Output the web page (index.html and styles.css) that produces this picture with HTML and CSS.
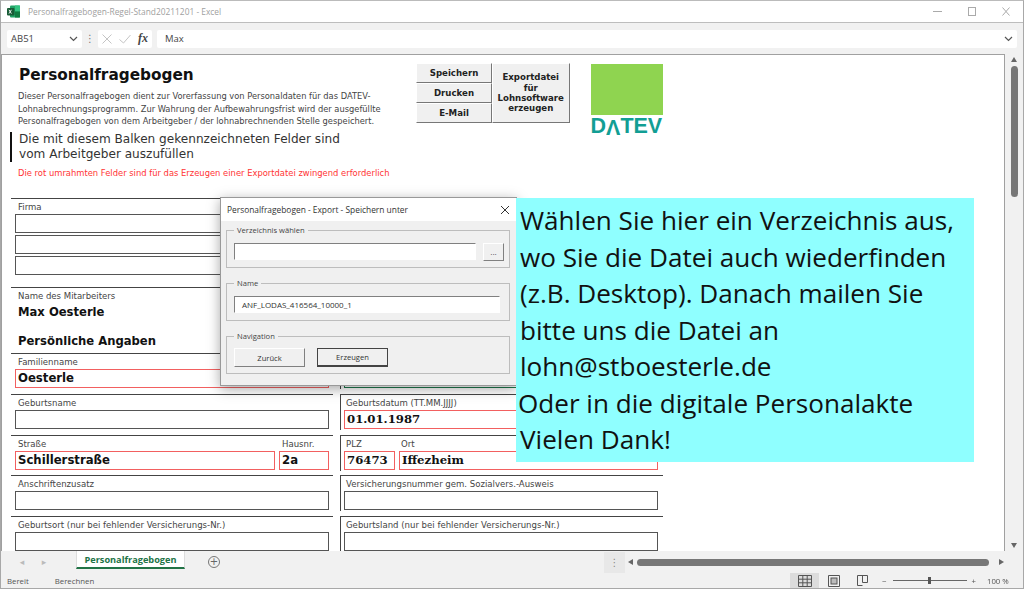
FILE: index.html
```html
<!DOCTYPE html>
<html lang="de">
<head>
    <meta charset="UTF-8">
    <title>Personalfragebogen-Regel-Stand20211201 - Excel</title>
    <link rel="stylesheet" href="styles.css">
</head>
<body>
    <header class="titlebar">
        <svg class="xl-icon" width="13" height="13" viewBox="0 0 13 13">
            <rect x="3" y="0.5" width="10" height="12" rx="1" fill="#21a366"/>
            <rect x="8" y="0.5" width="5" height="6" fill="#33c481"/>
            <rect x="8" y="6.5" width="5" height="6" fill="#107c41"/>
            <rect x="0" y="3" width="7.5" height="7.5" rx="1" fill="#185c37"/>
            <path d="M2 4.8l2.4 3.8M4.4 4.8L2 8.6" stroke="#fff" stroke-width="0.9"/>
        </svg>
        <span class="doc-title">Personalfragebogen-Regel-Stand20211201 - Excel</span>
        <div class="win-buttons">
            <svg width="9" height="9" viewBox="0 0 9 9"><path d="M0 4.5h9" stroke="#aaa"/></svg>
            <svg width="8" height="9" viewBox="0 0 8 9"><rect x="0.5" y="0.5" width="7" height="8" fill="none" stroke="#aaa"/></svg>
            <svg width="8" height="9" viewBox="0 0 8 9"><path d="M0.5 0.5l7 8M7.5 0.5l-7 8" stroke="#aaa"/></svg>
        </div>
    </header>

    <div class="formulabar">
        <div class="namebox">AB51
            <svg width="9" height="6" viewBox="0 0 9 6"><path d="M1 1l3.5 3.5L8 1" fill="none" stroke="#555" stroke-width="1.2"/></svg>
        </div>
        <span class="grip">&#8942;</span>
        <div class="fx-box">
            <svg width="10" height="10" viewBox="0 0 10 10"><path d="M0.5 0.5l9 9M9.5 0.5l-9 9" stroke="#c4c4c4"/></svg>
            <svg width="12" height="10" viewBox="0 0 12 10"><path d="M0.5 5.5l4 3.5L11.5 1" fill="none" stroke="#c4c4c4"/></svg>
            <span class="fx">fx</span>
        </div>
        <div class="formula">Max
            <svg width="9" height="6" viewBox="0 0 9 6"><path d="M1 1l3.5 3.5L8 1" fill="none" stroke="#555" stroke-width="1.2"/></svg>
        </div>
    </div>

    <main class="workarea">
        <div class="sheet">
            <section class="intro">
                <div class="intro-text">
                    <h1>Personalfragebogen</h1>
                    <p class="small">Dieser Personalfragebogen dient zur Vorerfassung von Personaldaten für das DATEV-<br>Lohnabrechnungsprogramm. Zur Wahrung der Aufbewahrungsfrist wird der ausgefüllte<br>Personalfragebogen von dem Arbeitgeber / der lohnabrechnenden Stelle gespeichert.</p>
                    <p class="marked">Die mit diesem Balken gekennzeichneten Felder sind<br>vom Arbeitgeber auszufüllen</p>
                    <p class="required">Die rot umrahmten Felder sind für das Erzeugen einer Exportdatei zwingend erforderlich</p>
                </div>
                <div class="actions">
                    <div class="action-col">
                        <button class="btn3d">Speichern</button>
                        <button class="btn3d">Drucken</button>
                        <button class="btn3d">E-Mail</button>
                    </div>
                    <button class="btn3d export">Exportdatei<br>für<br>Lohnsoftware<br>erzeugen</button>
                </div>
                <div class="logo">
                    <div class="logo-square"></div>
                    <div class="logo-text">D<span class="flip">V</span>TEV</div>
                </div>
            </section>

            <section class="form">
                <div class="col">
                    <div class="group firma">
                        <label>Firma</label>
                        <div class="field"></div>
                        <div class="field"></div>
                        <div class="field"></div>
                    </div>
                    <div class="group person">
                        <label>Name des Mitarbeiters</label>
                        <div class="bigvalue">Max Oesterle</div>
                        <div class="bigvalue heading">Persönliche Angaben</div>
                    </div>
                    <div class="group">
                        <label>Familienname</label>
                        <div class="field red">Oesterle</div>
                    </div>
                    <div class="group">
                        <label>Geburtsname</label>
                        <div class="field"></div>
                    </div>
                    <div class="group split">
                        <div class="grow"><label>Straße</label><div class="field red">Schillerstraße</div></div>
                        <div class="house"><label>Hausnr.</label><div class="field red">2a</div></div>
                    </div>
                    <div class="group">
                        <label>Anschriftenzusatz</label>
                        <div class="field"></div>
                    </div>
                    <div class="group">
                        <label>Geburtsort (nur bei fehlender Versicherungs-Nr.)</label>
                        <div class="field"></div>
                    </div>
                </div>
                <div class="col right">
                    <div class="group spacer"></div>
                    <div class="group">
                        <label></label>
                        <div class="field green"></div>
                    </div>
                    <div class="group">
                        <label>Geburtsdatum (TT.MM.JJJJ)</label>
                        <div class="field red serif">01.01.1987</div>
                    </div>
                    <div class="group split">
                        <div class="plz"><label>PLZ</label><div class="field red serif">76473</div></div>
                        <div class="grow"><label>Ort</label><div class="field red serif">Iffezheim</div></div>
                    </div>
                    <div class="group">
                        <label>Versicherungsnummer gem. Sozialvers.-Ausweis</label>
                        <div class="field"></div>
                    </div>
                    <div class="group">
                        <label>Geburtsland (nur bei fehlender Versicherungs-Nr.)</label>
                        <div class="field"></div>
                    </div>
                </div>
            </section>

            <!-- Export Dialog -->
            <div class="dialog">
                <div class="dialog-title">Personalfragebogen - Export - Speichern unter
                    <svg width="10" height="10" viewBox="0 0 10 10"><path d="M1 1l8 8M9 1l-8 8" stroke="#333"/></svg>
                </div>
                <div class="dialog-body">
                    <fieldset>
                        <legend>Verzeichnis wählen</legend>
                        <div class="dir-row">
                            <div class="textbox"></div>
                            <button class="browse">...</button>
                        </div>
                    </fieldset>
                    <fieldset>
                        <legend>Name</legend>
                        <div class="textbox name-box">ANF_LODAS_416564_10000_1</div>
                    </fieldset>
                    <fieldset class="nav-set">
                        <legend>Navigation</legend>
                        <div class="nav-row">
                            <button class="dlg-btn">Zurück</button>
                            <button class="dlg-btn default">Erzeugen</button>
                        </div>
                    </fieldset>
                </div>
            </div>

            <div class="callout">Wählen Sie hier ein Verzeichnis aus,<br>wo Sie die Datei auch wiederfinden<br>(z.B. Desktop). Danach mailen Sie<br>bitte uns die Datei an<br>lohn@stboesterle.de<br><span class="pasted">Oder in die digitale Personalakte</span><br>Vielen Dank!</div>
        </div>
        <div class="vscroll">
            <span class="arrow-up"></span>
            <span class="vthumb"></span>
            <span class="arrow-down"></span>
        </div>
    </main>

    <div class="tabbar">
        <span class="tab-nav first">&#9666;</span>
        <span class="tab-nav">&#9656;</span>
        <div class="tab">Personalfragebogen</div>
        <span class="add-sheet">+</span>
        <span class="tab-grip">&#8942;</span>
        <div class="hscroll">
            <span class="arrow-left"></span>
            <span class="hthumb"></span>
            <span class="arrow-right"></span>
        </div>
    </div>

    <footer class="statusbar">
        <span class="status-ready">Bereit</span>
        <span class="status-calc">Berechnen</span>
        <div class="views">
            <span class="view active">
                <svg width="14" height="12" viewBox="0 0 14 12"><path d="M.5.5h13v11H.5zM.5 4.2h13M.5 7.8h13M4.8.5v11M9.2.5v11" fill="none" stroke="#555"/></svg>
            </span>
            <span class="view">
                <svg width="12" height="12" viewBox="0 0 12 12"><path d="M.5.5h11v11H.5z" fill="none" stroke="#555"/><rect x="3" y="3" width="6" height="6" fill="#bbb" stroke="#555"/></svg>
            </span>
            <span class="view">
                <svg width="11" height="12" viewBox="0 0 11 12"><path d="M.5 10.5V.5h10v7h-5V.5M.5 10.5h5" fill="none" stroke="#555"/></svg>
            </span>
        </div>
        <div class="zoom">
            <span>&minus;</span>
            <div class="slider"><i></i></div>
            <span>+</span>
            <span class="zoom-val">100 %</span>
        </div>
    </footer>
</body>
</html>
```

FILE: styles.css
```css
/* Excel window */
* {
    box-sizing: border-box;
}

html, body {
    height: 100%;
}

body {
    margin: 0;
    width: 1024px;
    height: 589px;
    overflow: hidden;
    display: flex;
    flex-direction: column;
    font-family: "DejaVu Sans", Verdana, sans-serif;
    background-color: #f1f1f1;
    color: #333;
    border: 1px solid #a8a8a8;
    border-top-color: #bbb;
    filter: blur(0.3px);
}

.titlebar {
    height: 22px;
    background-color: #fff;
    display: flex;
    align-items: center;
    padding-left: 6px;
    border-bottom: 1px solid #bdbdbd;
    flex-shrink: 0;
}

.doc-title {
    margin-left: 8px;
    font-family: "Open Sans", sans-serif;
    font-size: 8.4px;
    color: #a0a0a0;
}

.win-buttons {
    margin-left: auto;
    display: flex;
    gap: 26px;
    padding-right: 13px;
}

.formulabar {
    height: 31px;
    background-color: #f1f1f1;
    display: flex;
    align-items: center;
    padding: 0 6px;
    flex-shrink: 0;
}

.namebox, .fx-box, .formula {
    height: 18px;
    background-color: #fff;
    border-radius: 2px;
    display: flex;
    align-items: center;
    font-family: "Open Sans", sans-serif;
    font-size: 9.5px;
    color: #444;
}

.namebox {
    width: 75px;
    padding: 0 4px;
    justify-content: space-between;
}

.grip {
    width: 16px;
    text-align: center;
    font-size: 10px;
    color: #777;
}

.fx-box {
    width: 54px;
    gap: 7px;
    padding-left: 4px;
}

.fx {
    font-family: "Liberation Serif", serif;
    font-style: italic;
    font-weight: 700;
    font-size: 12px;
    color: #444;
}

.formula {
    margin-left: 5px;
    flex: 1;
    padding: 0 4px 0 8px;
    justify-content: space-between;
}

.workarea {
    flex: 1;
    min-height: 0;
    display: flex;
}

.sheet {
    position: relative;
    width: 1004px;
    background-color: #fff;
    border: 1px solid #a0a0a0;
    border-width: 1px 1px 0 1px;
    overflow: hidden;
    padding: 9px 0 0 8px;
}

/* Top part of the form */
.intro {
    display: flex;
    height: 134px;
}

.intro-text {
    width: 406px;
}

h1 {
    margin: 1px 0 0 9px;
    font-size: 15.3px;
    line-height: 20px;
    color: #111;
}

.small {
    margin: 5px 0 0 8px;
    font-size: 8.3px;
    line-height: 12.5px;
    color: #444;
}

.marked {
    margin: 4px 0 0 0;
    padding-left: 7px;
    border-left: 2px solid #111;
    font-size: 12.1px;
    line-height: 15px;
    color: #333;
}

.required {
    margin: 5.5px 0 0 8px;
    font-size: 8.4px;
    line-height: 12px;
    color: #f33;
}

.actions {
    display: flex;
    height: 60px;
    margin-top: -1px;
}

.action-col {
    display: flex;
    flex-direction: column;
    width: 76px;
}

.btn3d {
    flex: 1;
    padding: 0;
    background-color: #f0f0f0;
    border: 0;
    border-right: 1px solid #777;
    border-bottom: 1px solid #777;
    border-top: 1px solid #fff;
    border-left: 1px solid #fff;
    font-family: "DejaVu Sans", sans-serif;
    font-weight: 700;
    font-size: 8.6px;
    color: #222;
}

.export {
    flex: none;
    width: 77.5px;
    line-height: 10.4px;
}

.logo {
    margin-left: 21px;
    width: 72px;
}

.logo-square {
    height: 51px;
    background-color: #8fd450;
}

.logo-text {
    margin-top: 3px;
    font-family: "Liberation Sans", sans-serif;
    font-weight: 700;
    font-size: 21.5px;
    line-height: 17px;
    white-space: nowrap;
    color: #129e94;
}

.flip {
    display: inline-block;
    transform: scaleY(-1);
}

/* Form columns */
.form {
    display: flex;
    gap: 7px;
    margin-left: 1px;
}

.col {
    width: 322px;
}

.col.right {
    width: 323px;
}

.group {
    border-top: 1px solid #444;
    padding: 1px 4px 0 4px;
    height: 40.75px;
}

.right .group {
    height: 36px;
    margin-bottom: 4.75px;
    border-left: 1px solid #444;
    padding-left: 3px;
    padding-right: 5px;
}

.right .group.spacer {
    height: 150px;
    margin-bottom: 5px;
    border: 0;
}

.group label {
    display: block;
    height: 14px;
    padding-left: 3px;
    font-size: 8.55px;
    line-height: 14px;
    color: #444;
}

.right .group label {
    padding-left: 2px;
}

.field {
    height: 19px;
    border: 1px solid #555;
    margin-bottom: 2px;
    padding-left: 2px;
    font-size: 11.7px;
    font-weight: 700;
    line-height: 17px;
    color: #111;
}

.field.red {
    border-color: #f26060;
}

.field.green {
    border-color: #1f7a4d;
}

.serif {
    font-family: "DejaVu Serif", serif;
}

.firma {
    height: 89px;
}

.person {
    height: 66px;
}

.bigvalue {
    font-size: 11.6px;
    font-weight: 700;
    line-height: 18px;
    height: 18px;
    padding-left: 3px;
    color: #111;
}

.heading {
    margin-top: 11px;
}

.split {
    display: flex;
    gap: 4px;
}

.grow {
    flex: 1;
}

.house {
    width: 50px;
}

.plz {
    width: 51px;
}

/* Dialog */
.dialog {
    position: absolute;
    left: 218px;
    top: 142px;
    width: 297px;
    height: 189px;
    background-color: #f0f0f0;
    border: 1px solid #999;
    box-shadow: 0 3px 12px rgba(0, 0, 0, 0.35);
    font-family: "Open Sans", sans-serif;
    font-size: 8px;
    color: #333;
}

.dialog-title {
    height: 23px;
    background-color: #fff;
    display: flex;
    align-items: center;
    justify-content: space-between;
    padding: 0 6px;
    font-size: 8.4px;
}

.dialog-body {
    padding: 4px 6px 0 5px;
}

fieldset {
    margin: 0 0 10px 0;
    padding: 8px 5px 0 7px;
    height: 43px;
    border: 1px solid #bdbdbd;
    min-width: 0;
}

fieldset.nav-set {
    padding-top: 7px;
}

legend {
    margin-left: 0;
    padding: 0 3px;
    font-size: 7.6px;
    line-height: 10px;
    color: #444;
}

.dir-row {
    display: flex;
    gap: 7px;
}

.textbox {
    flex: 1;
    height: 17px;
    background-color: #fff;
    border: 1px solid #fff;
    border-top-color: #808080;
    border-left-color: #808080;
    padding-left: 7px;
    line-height: 15px;
}

.name-box {
    margin-right: 4px;
}

.browse {
    width: 21px;
    height: 18px;
    padding: 0;
    background-color: #f0f0f0;
    border: 1px solid #fff;
    border-right-color: #808080;
    border-bottom-color: #808080;
    font-size: 8px;
    color: #333;
}

.nav-row {
    display: flex;
    gap: 12px;
}

.dlg-btn {
    width: 71px;
    height: 19px;
    padding: 0;
    background-color: #f0f0f0;
    border: 1px solid #fff;
    border-right-color: #808080;
    border-bottom-color: #808080;
    font-family: "Open Sans", sans-serif;
    font-size: 7.6px;
    color: #333;
}

.dlg-btn.default {
    border: 1px solid #444;
    border-right-width: 1px;
    border-bottom-width: 2px;
}

/* Callout */
.callout {
    position: absolute;
    left: 514px;
    top: 143px;
    width: 458px;
    height: 264px;
    padding: 4px 0 0 4px;
    background-color: #8fffff;
    font-family: "Open Sans", sans-serif;
    font-size: 26.1px;
    line-height: 36.5px;
    color: #111;
    white-space: nowrap;
}

.pasted {
    margin-left: -2px;
}

/* Scrollbars */
.vscroll {
    flex: 1;
    background-color: #f1f1f1;
    position: relative;
}

.vthumb {
    position: absolute;
    left: 6px;
    top: 12px;
    width: 7px;
    height: 131px;
    border-radius: 4px;
    background-color: #777;
}

.arrow-up, .arrow-down {
    position: absolute;
    left: 6px;
    width: 0;
    height: 0;
    border-left: 3.5px solid transparent;
    border-right: 3.5px solid transparent;
}

.arrow-up {
    top: 3px;
    border-bottom: 5px solid #666;
}

.arrow-down {
    bottom: 3px;
    border-top: 5px solid #666;
}

.tabbar {
    height: 22px;
    background-color: #f1f1f1;
    display: flex;
    align-items: center;
    flex-shrink: 0;
    position: relative;
}

.tab-nav {
    width: 20px;
    margin-left: 2px;
    font-size: 9px;
    text-align: center;
    color: #bbb;
}

.tab-nav.first {
    margin-left: 11px;
}

.tab {
    margin-left: 22px;
    width: 109px;
    height: 18px;
    align-self: flex-start;
    background-color: #fff;
    border-bottom: 2px solid #217346;
    border-left: 1px solid #ddd;
    border-right: 1px solid #ddd;
    text-align: center;
    font-family: "Open Sans", sans-serif;
    font-size: 9.2px;
    font-weight: 700;
    line-height: 17px;
    color: #217346;
}

.add-sheet {
    margin-left: 23px;
    width: 12px;
    height: 12px;
    border: 1px solid #777;
    border-radius: 50%;
    text-align: center;
    font-size: 10px;
    line-height: 10px;
    color: #666;
}

.tab-grip {
    margin-left: 384px;
    width: 21px;
    height: 21px;
    background-color: #e8e8e8;
    text-align: center;
    font-size: 10px;
    line-height: 21px;
    color: #888;
}

.hscroll {
    flex: 1;
    display: flex;
    align-items: center;
    gap: 4px;
    padding: 0 19px 0 3px;
}

.hthumb {
    flex: 1;
    height: 7px;
    border-radius: 4px;
    background-color: #777;
}

.arrow-left, .arrow-right {
    width: 0;
    height: 0;
    border-top: 3.5px solid transparent;
    border-bottom: 3.5px solid transparent;
}

.arrow-left {
    border-right: 5px solid #666;
}

.arrow-right {
    margin-left: 6px;
    border-left: 5px solid #666;
}

.statusbar {
    height: 15px;
    background-color: #f1f1f1;
    display: flex;
    align-items: center;
    flex-shrink: 0;
    font-family: "Open Sans", sans-serif;
    font-size: 7.8px;
    color: #555;
}

.status-ready {
    margin-left: 6px;
}

.status-calc {
    margin-left: 26px;
}

.views {
    margin-left: auto;
    display: flex;
}

.view {
    width: 29px;
    height: 15px;
    display: flex;
    align-items: center;
    justify-content: center;
}

.view.active {
    background-color: #dcdcdc;
}

.zoom {
    display: flex;
    align-items: center;
    margin-left: 5px;
    gap: 4px;
    width: 141px;
    white-space: nowrap;
}

.slider {
    margin-left: 3px;
    width: 74px;
    height: 1px;
    background-color: #666;
    position: relative;
}

.slider i {
    position: absolute;
    left: 35px;
    top: -3px;
    width: 3px;
    height: 7px;
    background-color: #555;
}

.zoom-val {
    margin-left: 7px;
}
```
